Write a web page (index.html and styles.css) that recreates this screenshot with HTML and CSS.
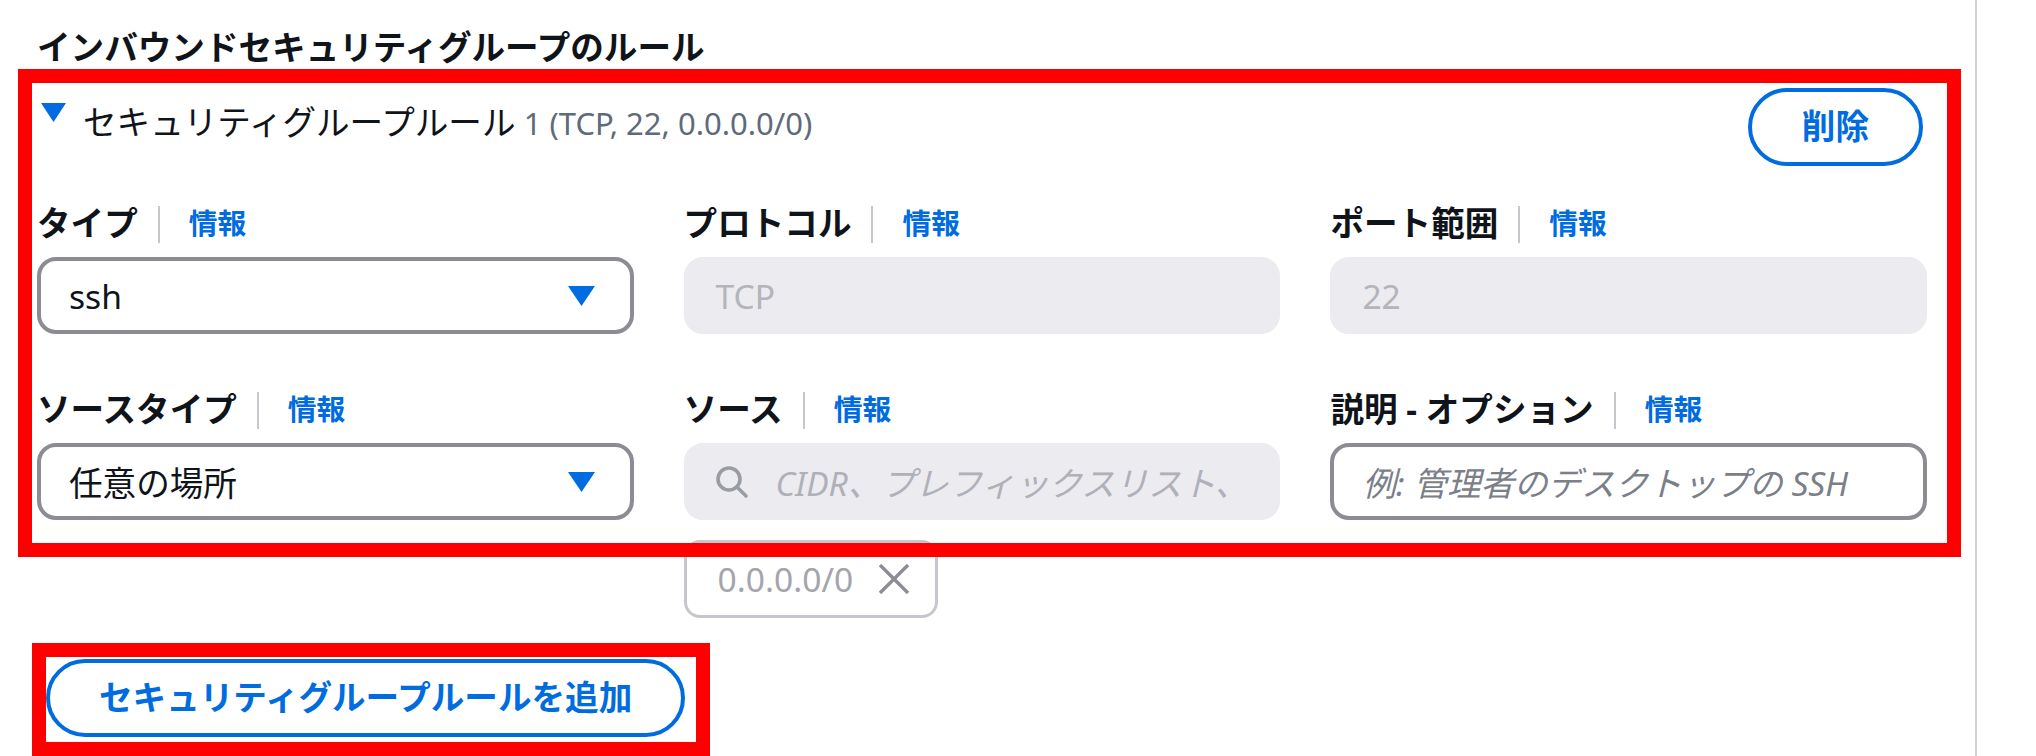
FILE: index.html
```html
<!DOCTYPE html>
<html lang="ja">
<head>
<meta charset="utf-8">
<title>インバウンドセキュリティグループのルール</title>
<link rel="stylesheet" href="styles.css">
</head>
<body>
<div class="page">
  <div class="main">
    <h2 class="title">インバウンドセキュリティグループのルール</h2>
    <div class="rule">
      <div class="rule-head">
        <div class="toggle">
          <svg class="toggle-caret" width="25" height="19" viewBox="0 0 25 19"><polygon points="0,0 25,0 12.5,19" fill="#006ce0"/></svg>
          <span class="rule-title"><span class="rule-name">セキュリティグループルール</span> <span class="rule-sum">1 (TCP, 22, 0.0.0.0/0)</span></span>
        </div>
        <button class="btn btn-delete">削除</button>
      </div>
      <div class="grid">
        <div class="field">
          <div class="label"><span>タイプ</span><i class="sep"></i><a class="info">情報</a></div>
          <div class="input select"><span>ssh</span><svg width="27" height="20" viewBox="0 0 27 20"><polygon points="0,0 27,0 13.5,20" fill="#006ce0"/></svg></div>
        </div>
        <div class="field">
          <div class="label"><span>プロトコル</span><i class="sep"></i><a class="info">情報</a></div>
          <div class="input disabled"><span>TCP</span></div>
        </div>
        <div class="field">
          <div class="label"><span>ポート範囲</span><i class="sep"></i><a class="info">情報</a></div>
          <div class="input disabled"><span>22</span></div>
        </div>
        <div class="field">
          <div class="label"><span>ソースタイプ</span><i class="sep"></i><a class="info">情報</a></div>
          <div class="input select"><span>任意の場所</span><svg width="27" height="20" viewBox="0 0 27 20"><polygon points="0,0 27,0 13.5,20" fill="#006ce0"/></svg></div>
        </div>
        <div class="field">
          <div class="label"><span>ソース</span><i class="sep"></i><a class="info">情報</a></div>
          <div class="input disabled search">
            <svg class="search-icon" width="34" height="34" viewBox="0 0 34 34"><circle cx="14" cy="14" r="11" fill="none" stroke="#9a9ca4" stroke-width="3.6"/><line x1="22.5" y1="22.5" x2="31" y2="31" stroke="#9a9ca4" stroke-width="3.6" stroke-linecap="round"/></svg>
            <span class="placeholder">CIDR、プレフィックスリスト、</span>
          </div>
          <div class="token"><span class="token-text">0.0.0.0/0</span><svg width="32" height="30" viewBox="0 0 32 30"><line x1="2" y1="1" x2="30" y2="29" stroke="#8c8c94" stroke-width="3.4"/><line x1="30" y1="1" x2="2" y2="29" stroke="#8c8c94" stroke-width="3.4"/></svg></div>
        </div>
        <div class="field">
          <div class="label"><span>説明 - オプション</span><i class="sep"></i><a class="info">情報</a></div>
          <div class="input"><span class="placeholder">例: 管理者のデスクトップの SSH</span></div>
        </div>
      </div>
    </div>
    <button class="btn btn-add">セキュリティグループルールを追加</button>
  </div>
  <div class="divider"></div>
  <div class="annot annot-rule"></div>
  <div class="annot annot-add"></div>
</div>
</body>
</html>
```

FILE: styles.css
```css
* { box-sizing: border-box; }
body {
  margin: 0;
  background: #ffffff;
  font-family: "Noto Sans", "Noto Sans CJK JP", sans-serif;
  color: #0f141a;
}
.page {
  position: relative;
  display: flex;
  height: 756px;
  overflow: hidden;
}
.main {
  width: 1975px;
  flex: none;
  padding: 23px 48px 0 37px;
}
.divider {
  width: 2px;
  flex: none;
  background: #d1d1d8;
}
.title {
  margin: 0;
  font-size: 33.6px;
  font-weight: 700;
  line-height: 48px;
}
.rule-head {
  margin-top: 17px;
  display: flex;
  justify-content: space-between;
  align-items: flex-start;
  padding-right: 4px;
}
.toggle {
  display: flex;
  align-items: flex-start;
  padding-top: 10px;
}
.toggle-caret {
  flex: none;
  margin: 5px 17px 0 4px;
}
.rule-title {
  line-height: 48px;
}
.rule-name {
  font-size: 33.6px;
}
.rule-sum {
  font-size: 31px;
  color: #5f6b7a;
  margin-left: 4px;
}
.btn {
  height: 78px;
  border: 4px solid #006ce0;
  border-radius: 40px;
  background: #ffffff;
  color: #006ce0;
  font-family: "Noto Sans", "Noto Sans CJK JP", sans-serif;
  font-size: 33.6px;
  font-weight: 700;
  padding: 0 50px;
  line-height: 1;
}
.btn-add {
  margin-top: 41px;
  margin-left: 9px;
  padding: 0 49px;
}
.grid {
  margin-top: 37px;
  display: grid;
  grid-template-columns: repeat(3, 1fr);
  column-gap: 50px;
  row-gap: 55px;
  align-items: start;
}
.label {
  display: flex;
  align-items: center;
  height: 48px;
  padding-bottom: 11px;
  margin-bottom: 6px;
  font-size: 33.6px;
  font-weight: 700;
  white-space: nowrap;
}
.sep {
  display: block;
  width: 2px;
  height: 37px;
  background: #c6c6cd;
  margin: 6px 29px 0 20px;
}
.info {
  font-size: 28.8px;
  color: #006ce0;
  font-weight: 700;
}
.input {
  height: 77px;
  border: 4px solid #8c8c94;
  border-radius: 19px;
  display: flex;
  align-items: center;
  padding: 0 28px;
  font-size: 33.6px;
  white-space: nowrap;
  overflow: hidden;
  background: #ffffff;
}
.select {
  justify-content: space-between;
  padding-right: 35px;
}
.disabled {
  background: #ebebf0;
  border-color: #ebebf0;
  color: #b4b4bb;
}
.search {
  padding-left: 27px;
}
.search-icon {
  flex: none;
  margin-right: 27px;
}
.placeholder {
  font-style: italic;
  color: #7b7f88;
}
.disabled .placeholder {
  color: #b0b0b8;
}
.token {
  margin-top: 20px;
  display: inline-flex;
  align-items: center;
  height: 78px;
  border: 3px solid #c6c6cd;
  border-radius: 16px;
  padding: 0 25px 0 31px;
  gap: 25px;
}
.token-text {
  font-size: 33.6px;
  color: #a4a4ad;
}
.annot {
  position: absolute;
  border: 14px solid #ff0000;
  pointer-events: none;
}
.annot-rule {
  left: 18px;
  top: 69px;
  width: 1943px;
  height: 488px;
}
.annot-add {
  left: 32px;
  top: 643px;
  width: 678px;
  height: 113px;
}
```
